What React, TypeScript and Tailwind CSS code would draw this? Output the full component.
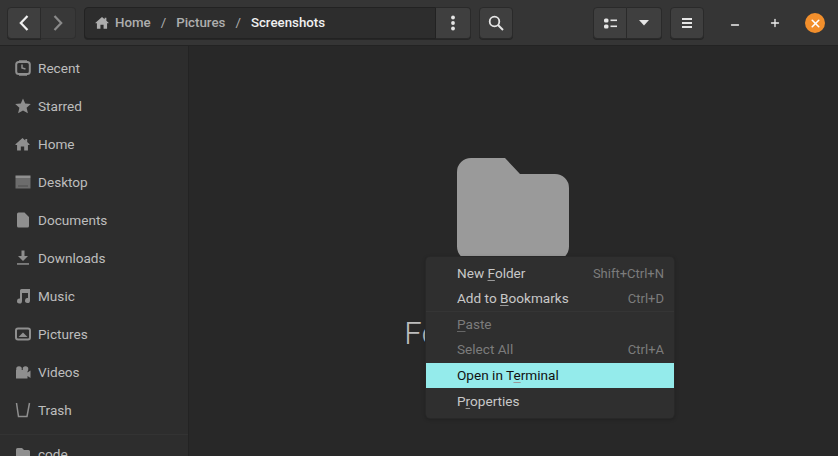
import { ReactNode } from 'react'
import { X, Plus, Minus } from 'lucide-react'

const font = "font-['Roboto',sans-serif]"

const HomeIcon = ({ className, size = 15 }: { className?: string; size?: number }) => (
  <svg viewBox="0 0 16 16" width={size} height={size} className={className} fill="currentColor">
    <path d="M8 1 L11 3.6 V2 H13 V5.3 L15.5 7.6 V8.4 H13.8 V14.5 H9.8 V10 H6.2 V14.5 H2.2 V8.4 H0.5 V7.6 Z" />
  </svg>
)

const icons: Record<string, ReactNode> = {
  recent: (
    <svg viewBox="0 0 16 16" width="16" height="16" fill="none" stroke="currentColor">
      <path d="M4 0.8 H12 M4 15.2 H12" strokeWidth="1.2" />
      <rect x="1.2" y="2" width="13.6" height="12" rx="2.5" strokeWidth="2" />
      <path d="M7 4.5 V8 L10.5 9" strokeWidth="1.5" />
    </svg>
  ),
  star: (
    <svg viewBox="0 0 16 16" width="16" height="16" fill="currentColor">
      <path d="M8 0.5 L10.2 5.6 L15.8 6.1 L11.6 9.8 L12.9 15.3 L8 12.4 L3.1 15.3 L4.4 9.8 L0.2 6.1 L5.8 5.6 Z" />
    </svg>
  ),
  home: <HomeIcon />,
  desktop: (
    <svg viewBox="0 0 16 16" width="16" height="16" fill="currentColor">
      <rect x="0.5" y="1.5" width="15" height="2.5" />
      <rect x="0.5" y="4" width="15" height="10.5" opacity="0.65" />
      <path d="M3 11.5h10v1H3z" fill="#2d2d2d" opacity="0.5" />
    </svg>
  ),
  documents: (
    <svg viewBox="0 0 16 16" width="16" height="16" fill="currentColor">
      <path d="M3.5 0.5 H9.5 L14 5 V14 A1.5 1.5 0 0 1 12.5 15.5 H3.5 A1.5 1.5 0 0 1 2 14 V2 A1.5 1.5 0 0 1 3.5 0.5 Z" />
    </svg>
  ),
  downloads: (
    <svg viewBox="0 0 16 16" width="16" height="16" fill="currentColor">
      <path d="M6.5 0.5 H9.5 V6 H13 L8 11 L3 6 H6.5 Z" />
      <rect x="2" y="13.2" width="12" height="1.5" />
    </svg>
  ),
  music: (
    <svg viewBox="0 0 16 16" width="16" height="16" fill="currentColor">
      <path d="M5 2.5 A1.5 1.5 0 0 1 6.5 1 H15 V12.5 A2.5 2.5 0 1 1 13 10.1 V5 H7 V13 A2.5 2.5 0 1 1 5 10.6 Z" />
    </svg>
  ),
  pictures: (
    <svg viewBox="0 0 16 16" width="16" height="16" fill="none" stroke="currentColor">
      <rect x="1" y="2.5" width="14" height="11" rx="2" strokeWidth="2" />
      <path d="M3.5 11 L8 6.5 L12.5 11 Z" fill="currentColor" stroke="none" />
    </svg>
  ),
  videos: (
    <svg viewBox="0 0 16 16" width="16" height="16" fill="currentColor">
      <circle cx="4" cy="5" r="2.8" />
      <circle cx="10.5" cy="5" r="2.8" />
      <path d="M1 6 H12.5 V8.5 L15.5 6.5 V14 L12.5 12 V14.5 H1 Z" />
    </svg>
  ),
  trash: (
    <svg viewBox="0 0 16 16" width="16" height="16" fill="none" stroke="currentColor" strokeWidth="1.5">
      <path d="M1.5 1 L3.5 14.5 H12 L14.5 1" />
    </svg>
  ),
  folder: (
    <svg viewBox="0 0 16 16" width="16" height="16" fill="currentColor">
      <path d="M1 3.5 A1.5 1.5 0 0 1 2.5 2 H7 L9 4 H13.5 A1.5 1.5 0 0 1 15 5.5 V13 H1 Z" />
    </svg>
  ),
}

const places = [
  { label: 'Recent', icon: 'recent' },
  { label: 'Starred', icon: 'star' },
  { label: 'Home', icon: 'home' },
  { label: 'Desktop', icon: 'desktop' },
  { label: 'Documents', icon: 'documents' },
  { label: 'Downloads', icon: 'downloads' },
  { label: 'Music', icon: 'music' },
  { label: 'Pictures', icon: 'pictures' },
  { label: 'Videos', icon: 'videos' },
  { label: 'Trash', icon: 'trash' },
]

const btn = 'flex h-[32px] items-center justify-center border border-[#2a2a2a] bg-[#3f3f3f] shadow-[0_1px_0_#262626]'

const U = ({ children, muted }: { children: string; muted?: boolean }) => (
  <span className={`underline underline-offset-2 ${muted ? 'decoration-[#666]' : 'decoration-[#999]'}`}>{children}</span>
)

const MenuItem = ({ children, accel, disabled, active, tall }: { children: ReactNode; accel?: string; disabled?: boolean; active?: boolean; tall?: boolean }) => (
  <div
    className={`flex items-center justify-between pl-[31px] pr-[10px] text-[13.6px] ${tall ? 'h-[26px]' : 'h-[25px]'} ${
      active ? 'bg-[#94ebeb] text-[#111]' : disabled ? 'text-[#7c7c7c]' : 'text-[#c8c8c8]'
    }`}
  >
    <span>{children}</span>
    {accel && <span className="text-[13px] text-[#7c7c7c]">{accel}</span>}
  </div>
)

export default function App() {
  return (
    <div className={`${font} flex h-[456px] w-[838px] flex-col overflow-hidden bg-[#282828] text-[14px]`}>
      {/* header bar */}
      <div className="flex h-[46px] shrink-0 items-start border-b border-[#232323] bg-[#353535] px-[7px] pt-[7px]">
        <div className="flex">
          <div className={`${btn} w-[34px] rounded-l-[4px] text-[#f0f0f0]`}>
            <svg viewBox="0 0 10 16" width="10" height="16" fill="none" stroke="currentColor" strokeWidth="2.2">
              <path d="M8.5 1 L1.8 8 L8.5 15" />
            </svg>
          </div>
          <div className="flex h-[32px] w-[35px] items-center justify-center rounded-r-[4px] border border-l-0 border-[#2f2f2f] bg-[#383838] text-[#8a8a8a]">
            <svg viewBox="0 0 10 16" width="10" height="16" fill="none" stroke="currentColor" strokeWidth="2.2">
              <path d="M1.5 1 L8.2 8 L1.5 15" />
            </svg>
          </div>
        </div>

        <div className="ml-[8px] flex">
          <div className="flex h-[32px] w-[352px] items-center rounded-l-[4px] border border-[#222] bg-[#2d2d2d] pb-[1px] pl-[10px] text-[13.3px] font-medium text-[#adadad] shadow-[0_1px_0_#262626]">
            <HomeIcon className="mr-[6px]" size={14} />
            <span>Home</span>
            <span className="mx-[10px] font-normal">/</span>
            <span>Pictures</span>
            <span className="mx-[10px] font-normal">/</span>
            <span className="text-[#f0f0f0]">Screenshots</span>
          </div>
          <div className={`${btn} w-[35px] rounded-r-[4px] border-l-0`}>
            <svg viewBox="0 0 4 16" width="4" height="16" fill="#e6e6e6">
              <circle cx="2" cy="2.5" r="1.9" />
              <circle cx="2" cy="8" r="1.9" />
              <circle cx="2" cy="13.5" r="1.9" />
            </svg>
          </div>
        </div>

        <div className={`${btn} ml-[8px] w-[34px] rounded-[4px] text-[#e6e6e6]`}>
          <svg viewBox="0 0 16 16" width="16" height="16" fill="none" stroke="currentColor">
            <circle cx="6.5" cy="6.5" r="4.8" strokeWidth="1.8" />
            <path d="M10 10 L15 15" strokeWidth="2" />
          </svg>
        </div>

        <div className="ml-[80px] flex">
          <div className={`${btn} w-[34px] rounded-l-[4px]`}>
            <svg viewBox="0 0 13 11" width="13" height="11" fill="#e6e6e6">
              <rect x="0" y="0.5" width="4.5" height="4" rx="1.5" />
              <rect x="0" y="6.5" width="4.5" height="4" rx="1.5" />
              <rect x="6.5" y="1.5" width="6.5" height="1.6" />
              <rect x="6.5" y="7.5" width="6.5" height="1.6" />
            </svg>
          </div>
          <div className={`${btn} w-[35px] rounded-r-[4px] border-l-0`}>
            <svg viewBox="0 0 10 6" width="10" height="6" fill="#e6e6e6">
              <path d="M0 0 H10 L5 5.5 Z" />
            </svg>
          </div>
        </div>

        <div className={`${btn} ml-[8px] w-[34px] rounded-[4px]`}>
          <svg viewBox="0 0 10 10" width="10" height="10" fill="#e6e6e6">
            <rect y="0" width="10" height="2" />
            <rect y="4" width="10" height="2" />
            <rect y="8" width="10" height="2" />
          </svg>
        </div>

        <div className="ml-[21px] flex h-[32px] w-[20px] items-center justify-center text-[#f0f0f0]">
          <Minus size={12} strokeWidth={2.6} className="mt-[4px]" />
        </div>
        <div className="ml-[20px] flex h-[32px] w-[20px] items-center justify-center text-[#f0f0f0]">
          <Plus size={12} strokeWidth={2.6} />
        </div>
        <div className="ml-[20px] mt-[6px] flex h-[20px] w-[20px] items-center justify-center rounded-full bg-[#f28f2c] text-white">
          <X size={13} strokeWidth={3} />
        </div>
      </div>

      <div className="flex min-h-0 flex-1">
        {/* sidebar */}
        <div className="w-[189px] shrink-0 overflow-hidden border-r border-[#232323] bg-[#2d2d2d] pt-[3px] text-[13.6px] text-[#bdbdbd]">
          {places.map(p => (
            <div key={p.label} className="flex h-[38px] items-center pl-[15px]">
              <span className="flex w-[23px] text-[#8f8f8f]">{icons[p.icon]}</span>
              <span>{p.label}</span>
            </div>
          ))}
          <div className="mt-[5px] h-px bg-[#333]" />
          <div className="flex h-[38px] items-center pl-[15px]">
            <span className="flex w-[23px] text-[#8f8f8f]">{icons.folder}</span>
            <span>code</span>
          </div>
        </div>

        {/* empty folder placeholder */}
        <div className="relative flex flex-1 flex-col items-center pr-[1px] pt-[112px]">
          <svg viewBox="0 0 112 112" width="112" height="112" fill="#9a9a9a">
            <path d="M14 0 H48 L63 16 H98 A14 14 0 0 1 112 30 V88.5 A14 14 0 0 1 98 102.5 H14 A14 14 0 0 1 0 88.5 V14 A14 14 0 0 1 14 0 Z" />
          </svg>
          <div className="mt-[44px] text-[31px] font-light leading-[40px] tracking-[0.5px] text-[#bdbdbd]">Folder is Empty</div>

          {/* context menu */}
          <div className="absolute left-[237px] top-[211px] w-[248px] rounded-[4px] bg-[#2f2f2f] pb-[4px] pt-[4px] shadow-[0_0_0_1px_#282828,0_1px_4px_rgba(0,0,0,0.3)]">
            <MenuItem accel="Shift+Ctrl+N">New <U>F</U>older</MenuItem>
            <MenuItem accel="Ctrl+D">Add to <U>B</U>ookmarks</MenuItem>
            <div className="h-px bg-[#353535]" />
            <MenuItem disabled><U muted>P</U>aste</MenuItem>
            <MenuItem disabled accel="Ctrl+A">Select All</MenuItem>
            <div className="mt-px">
              <MenuItem active>Open in T<U>e</U>rminal</MenuItem>
            </div>
            <MenuItem tall>P<U>r</U>operties</MenuItem>
          </div>
        </div>
      </div>
    </div>
  )
}
